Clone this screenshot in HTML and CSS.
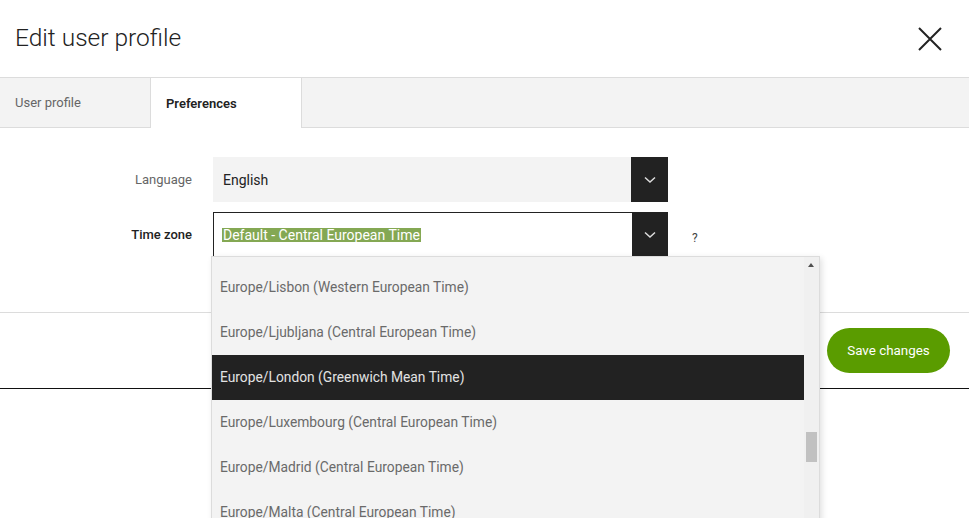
FILE: index.html
```html
<!DOCTYPE html>
<html lang="en">
<head>
<meta charset="utf-8">
<title>Edit user profile</title>
<link rel="stylesheet" href="styles.css">
</head>
<body>
<div class="modal">
  <header class="modal-header">
    <h1 class="modal-title">Edit user profile</h1>
    <button class="close-btn" aria-label="Close">
      <svg width="24" height="24" viewBox="0 0 24 24"><path d="M1 1L23 23M23 1L1 23" stroke="#222" stroke-width="2" fill="none"/></svg>
    </button>
  </header>
  <nav class="tabs">
    <div class="tab">User profile</div>
    <div class="tab active">Preferences</div>
  </nav>
  <section class="form">
    <div class="row">
      <label class="label">Language</label>
      <div class="select select-filled">
        <span class="select-value">English</span>
        <span class="select-btn"><svg width="12" height="8" viewBox="0 0 12 8"><path d="M1 1.5L6 6L11 1.5" stroke="#ddd" stroke-width="1.5" fill="none"/></svg></span>
      </div>
    </div>
    <div class="row">
      <label class="label label-strong">Time zone</label>
      <div class="select select-open">
        <span class="select-value"><span class="sel-text">Default - Central European Time</span></span>
        <span class="select-btn"><svg width="12" height="8" viewBox="0 0 12 8"><path d="M1 1.5L6 6L11 1.5" stroke="#ddd" stroke-width="1.5" fill="none"/></svg></span>
      </div>
      <span class="help">?</span>
    </div>
  </section>
  <footer class="modal-footer">
    <button class="save-btn">Save changes</button>
  </footer>
</div>

<div class="dropdown">
  <ul class="options">
    <li class="partial"></li>
    <li>Europe/Lisbon (Western European Time)</li>
    <li>Europe/Ljubljana (Central European Time)</li>
    <li class="hl">Europe/London (Greenwich Mean Time)</li>
    <li>Europe/Luxembourg (Central European Time)</li>
    <li>Europe/Madrid (Central European Time)</li>
    <li>Europe/Malta (Central European Time)</li>
  </ul>
  <div class="scrollbar">
    <span class="arrow-up"></span>
    <span class="thumb"></span>
  </div>
</div>
</body>
</html>
```
FILE: styles.css
```css
* { box-sizing: border-box; }
html, body { margin: 0; padding: 0; }
body {
  width: 969px;
  height: 518px;
  overflow: hidden;
  background: #fff;
  font-family: Roboto, "Liberation Sans", Arial, sans-serif;
  color: #222;
  position: relative;
}
.modal {
  border-bottom: 1px solid #111;
}
.modal-header {
  height: 77px;
  display: flex;
  align-items: center;
  justify-content: space-between;
  padding: 0 27px 0 15px;
}
.modal-title {
  margin: 0 0 2px;
  font-size: 24.5px;
  font-weight: 300;
  color: #222;
}
.close-btn {
  width: 24px;
  height: 24px;
  padding: 0;
  border: 0;
  background: none;
  display: flex;
  margin-top: 1px;
}
.tabs {
  display: flex;
  height: 51px;
  background: #f3f3f3;
  border-top: 1px solid #dcdcdc;
  border-bottom: 1px solid #dcdcdc;
}
.tab {
  width: 150px;
  padding: 0 15px;
  display: flex;
  align-items: center;
  font-size: 13px;
  color: #666;
}
.tab.active {
  width: 152px;
  background: #fff;
  color: #222;
  font-weight: 600;
  border-left: 1px solid #dcdcdc;
  border-right: 1px solid #dcdcdc;
  margin-bottom: -1px;
}
.form {
  padding: 29px 0 55px;
  display: flex;
  flex-direction: column;
  gap: 10px;
}
.row {
  display: flex;
  align-items: center;
  height: 45px;
}
.label {
  width: 193px;
  text-align: right;
  font-size: 13px;
  color: #666;
  padding-right: 1px;
  margin-right: 20px;
}
.label-strong {
  color: #222;
  font-weight: 500;
}
.select {
  width: 455px;
  height: 45px;
  display: flex;
  align-items: stretch;
}
.select-filled { background: #f3f3f3; }
.select-open {
  background: #fff;
  border: 1px solid #222;
}
.select-value {
  flex: 1;
  display: flex;
  align-items: center;
  padding-left: 10px;
  font-size: 14px;
  color: #222;
}
.select-open .select-value { padding-left: 8px; }
.sel-text {
  background: #84a853;
  color: #fff;
  line-height: 14px;
  padding: 0 1px;
}
.select-btn {
  width: 37px;
  background: #222;
  display: flex;
  align-items: center;
  justify-content: center;
}
.select-open .select-btn { width: 36px; margin: -1px -1px -1px 0; }
.help {
  margin-left: 24px;
  margin-top: 6px;
  font-size: 12px;
  color: #444;
}
.modal-footer {
  border-top: 1px solid #dcdcdc;
  display: flex;
  justify-content: flex-end;
  padding: 15px 19px 15px 0;
}
.save-btn {
  width: 123px;
  height: 45px;
  border: 0;
  border-radius: 23px;
  background: #5a9c00;
  color: #fff;
  font-family: Roboto, "Liberation Sans", Arial, sans-serif;
  font-size: 13.4px;
  padding: 0;
}
.dropdown {
  position: absolute;
  left: 211px;
  top: 256px;
  width: 609px;
  height: 280px;
  border: 1px solid #dcdcdc;
  background: #f3f3f3;
  box-shadow: 2px 2px 6px rgba(0,0,0,0.12);
  display: flex;
  overflow: hidden;
}
.options {
  list-style: none;
  margin: 0;
  padding: 0;
  flex: 1;
}
.options li {
  height: 45px;
  display: flex;
  align-items: center;
  padding: 0 0 2px 8px;
  font-size: 13.8px;
  color: #6a6a6a;
}
.options li.partial { height: 8px; padding: 0; }
.options li.hl {
  background: #222;
  color: #e2e2e2;
}
.scrollbar {
  width: 15px;
  background: #f0f0f0;
  position: relative;
}
.arrow-up {
  position: absolute;
  left: 4px;
  top: 6px;
  width: 0;
  height: 0;
  border-left: 3.5px solid transparent;
  border-right: 3.5px solid transparent;
  border-bottom: 4px solid #505050;
}
.thumb {
  position: absolute;
  left: 2px;
  top: 175px;
  width: 11px;
  height: 30px;
  background: #c1c1c1;
}
```
